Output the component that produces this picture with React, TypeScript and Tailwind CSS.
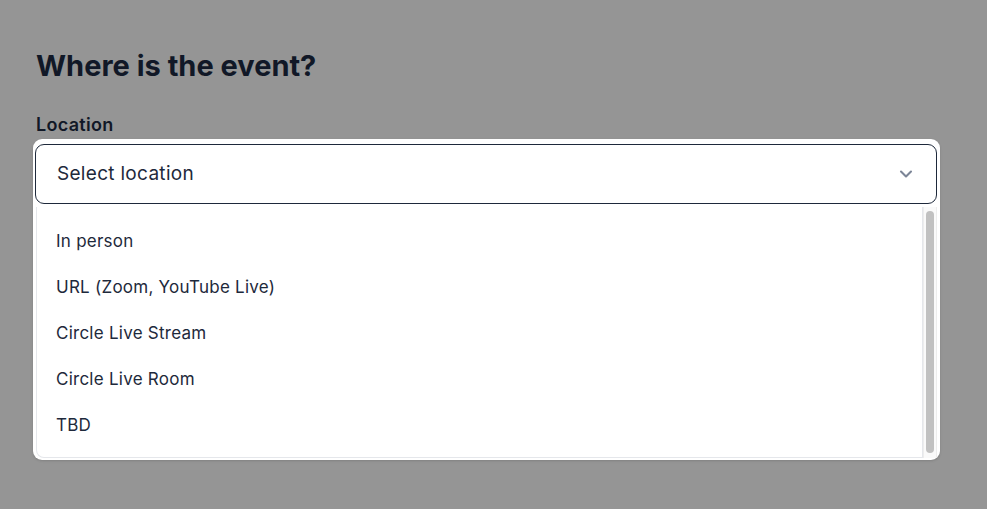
import { ChevronDown } from "lucide-react"

const options = ["In person", "URL (Zoom, YouTube Live)", "Circle Live Stream", "Circle Live Room", "TBD"]

export default function App() {
  return (
    <div className="h-[509px] w-full overflow-hidden bg-[#959595] font-['Inter',sans-serif] text-[#1e293b]">
      <div className="pl-[36px] pt-[46px]">
        <h1 className="text-[29px] font-bold leading-[40px] text-[#111827]">Where is the event?</h1>
        <label className="mt-[26px] block text-[18px] font-semibold leading-[26px] tracking-[0.3px] text-[#111827]">Location</label>
      </div>
      <div className="ml-[33px] mt-[1px] w-[907px] rounded-[9px] bg-white pl-[2px] pr-[3px] pt-[5px] pb-[2px] shadow-sm">
        {/* trigger */}
        <div className="flex h-[60px] items-center justify-between rounded-[9px] border border-[#1e293b] bg-white pl-[21px] pr-[20px]">
          <span className="text-[19px] leading-[26px] tracking-[0.3px] text-[#1e293b]">Select location</span>
          <ChevronDown className="h-[20px] w-[20px] text-[#7c8597]" strokeWidth={2.5} />
        </div>
        {/* list */}
        <div className="mt-[3px] flex h-[251px]">
          <div className="ml-[1px] flex-1 rounded-bl-[8px] border-b border-l border-r border-[#e5e7eb] bg-white pt-[12px] pb-[7px]">
            {options.map(o => (
              <div key={o} className="flex h-[46px] items-center pl-[19px] text-[17px] tracking-[0.25px] text-[#1e293b]">
                {o}
              </div>
            ))}
          </div>
          <div className="flex w-[14px] justify-center border-l border-r border-[#ededed] bg-[#fafafa] pt-[4px] pb-[5px]">
            <div className="w-[8px] rounded-full bg-[#c1c1c1]" />
          </div>
        </div>
      </div>
    </div>
  )
}
